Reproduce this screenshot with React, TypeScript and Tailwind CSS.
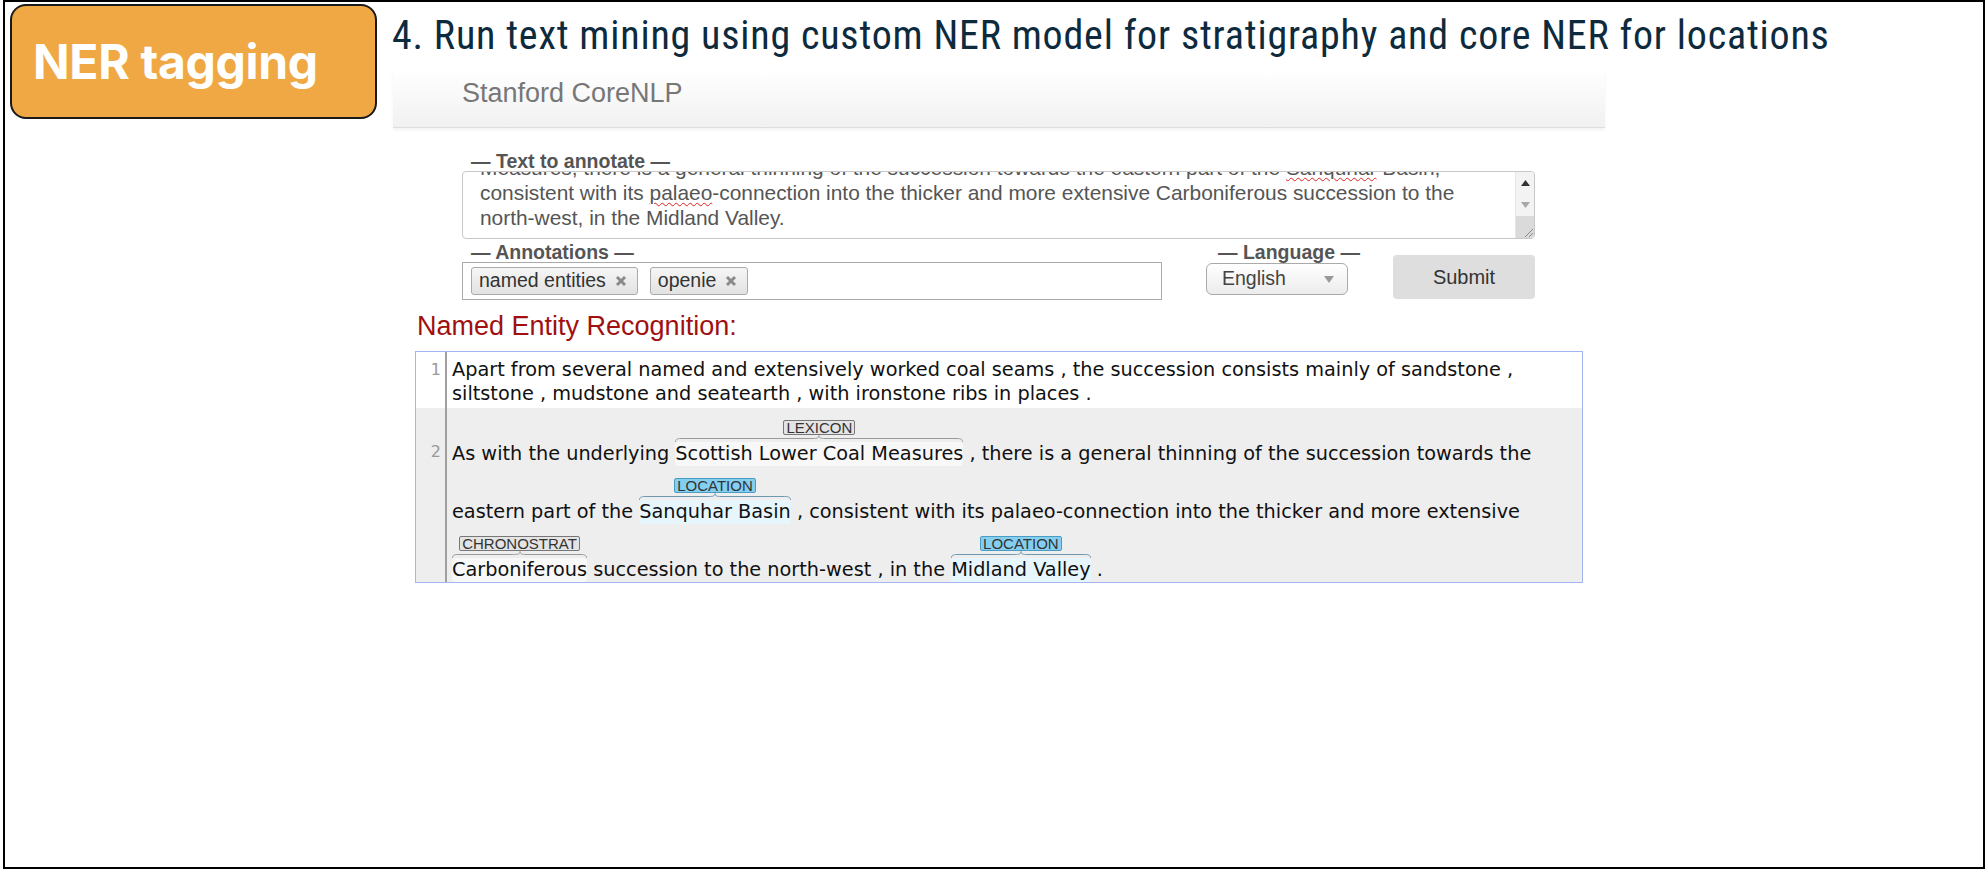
import React from "react";

type Kind = "lexicon" | "location" | "chrono";

const labelClass: Record<Kind, string> = {
  lexicon: "bg-[#e4e4e4] border-[#777777]",
  location: "bg-[#84cff0] border-[#4b9cc2]",
  chrono: "bg-[#e4e4e4] border-[#777777]",
};

const wordClass: Record<Kind, string> = {
  lexicon: "bg-[#f8f8f8]",
  location: "bg-[#e7f6fd]",
  chrono: "bg-[#f8f8f8]",
};

const braceColor: Record<Kind, string> = {
  lexicon: "#9a9a9a",
  location: "#6f97b2",
  chrono: "#9a9a9a",
};

function Brace({ color }: { color: string }) {
  return (
    <div className="flex h-[7px]">
      <svg width="6" height="7" viewBox="0 0 6 7">
        <path d="M0.5 7 C0.5 4.5 2 3.5 6 3.5" stroke={color} fill="none" />
      </svg>
      <svg className="h-[7px] flex-1" viewBox="0 0 10 7" preserveAspectRatio="none">
        <path d="M0 3.5 H10" stroke={color} vectorEffect="non-scaling-stroke" />
      </svg>
      <svg width="12" height="7" viewBox="0 0 12 7">
        <path d="M0 3.5 C4 3.5 6 3 6 0.5 C6 3 8 3.5 12 3.5" stroke={color} fill="none" />
      </svg>
      <svg className="h-[7px] flex-1" viewBox="0 0 10 7" preserveAspectRatio="none">
        <path d="M0 3.5 H10" stroke={color} vectorEffect="non-scaling-stroke" />
      </svg>
      <svg width="6" height="7" viewBox="0 0 6 7">
        <path d="M0 3.5 C4 3.5 5.5 4.5 5.5 7" stroke={color} fill="none" />
      </svg>
    </div>
  );
}

function Entity({ kind, label, text }: { kind: Kind; label: string; text: string }) {
  return (
    <span className="inline-flex flex-col">
      <span
        className={`self-center h-[15px] px-[2px] border rounded-[2px] text-[15px] leading-[13px] text-[#333] font-['Liberation_Sans',Arial,sans-serif] ${labelClass[kind]}`}
      >
        {label}
      </span>
      <Brace color={braceColor[kind]} />
      <span className={`leading-[24px] rounded-[4px] ${wordClass[kind]}`}>{text}</span>
    </span>
  );
}

function Chip({ text }: { text: string }) {
  return (
    <div className="flex items-center h-[28px] pl-[7px] pr-[10px] gap-[9px] border border-[#aaaaaa] rounded-[3px] bg-gradient-to-b from-[#f6f6f6] to-[#e2e2e2] text-[#333]">
      <span>{text}</span>
      <svg width="12" height="12" viewBox="0 0 12 12">
        <path d="M2 2 L10 10 M10 2 L2 10" stroke="#8a8a8a" strokeWidth="3" />
      </svg>
    </div>
  );
}

export default function App() {
  return (
    <div className="w-[1986px] h-[870px] bg-white overflow-hidden">
      <div className="ml-[3px] w-[1982px] h-[869px] border-2 border-black flex items-start">
        {/* badge */}
        <div className="ml-[5px] mt-[2px] w-[367px] h-[115px] shrink-0 rounded-[16px] border-2 border-[#1a1a1a] bg-[#f0a845] flex items-center pl-[21px]">
          <span className="text-white font-bold text-[48px] font-['Inter',sans-serif] tracking-[-0.3px]">
            NER tagging
          </span>
        </div>

        <div className="ml-[15px] flex flex-col">
          <div className="mt-[11px] h-[46px] leading-[46px] text-[40px] text-[#0e2a3d] font-['Roboto',sans-serif] font-stretch-condensed tracking-[0.8px] whitespace-nowrap">
            4. Run text mining using custom NER model for stratigraphy and core NER for locations
          </div>

          <div className="mt-[11px] ml-[1px] w-[1212px] font-['Liberation_Sans',Arial,sans-serif]">
            {/* CoreNLP header */}
            <div className="h-[58px] pt-[8px] pl-[69px] bg-gradient-to-b from-white to-[#f1f1f1] border-b border-[#dddddd] shadow-[0_2px_3px_rgba(0,0,0,0.05)]">
              <span className="text-[27px] leading-[30px] text-[#777]">Stanford CoreNLP</span>
            </div>

            {/* form */}
            <div className="pl-[69px] w-[1142px] text-[19.5px]">
              <div className="relative z-10 mt-[24px] h-[19px] leading-[19px] pl-[9px] font-bold text-[#555]">
                — Text to annotate —
              </div>
              <div className="h-[68px] flex border border-[#c8c8c8] rounded-[4px] overflow-hidden bg-white">
                <div className="flex-1 overflow-hidden pl-[17px] text-[#555] text-[20.9px] leading-[25px] whitespace-nowrap">
                  <div className="-mt-[17px]">
                    Measures, there is a general thinning of the succession towards the eastern part of the{" "}
                    <span className="underline decoration-wavy decoration-[#e02020] decoration-1 underline-offset-2">
                      Sanquhar
                    </span>{" "}
                    Basin,
                  </div>
                  <div>
                    consistent with its{" "}
                    <span className="underline decoration-wavy decoration-[#e02020] decoration-1 underline-offset-2">
                      palaeo
                    </span>
                    -connection into the thicker and more extensive Carboniferous succession to the
                  </div>
                  <div>north-west, in the Midland Valley.</div>
                </div>
                <div className="w-[19px] flex flex-col bg-[#f3f3f3] border-l border-[#e6e6e6]">
                  <div className="h-[22px] flex items-center justify-center">
                    <svg width="9" height="6" viewBox="0 0 9 6">
                      <path d="M4.5 0 L9 6 L0 6 Z" fill="#333" />
                    </svg>
                  </div>
                  <div className="h-[22px] flex items-center justify-center">
                    <svg width="9" height="6" viewBox="0 0 9 6">
                      <path d="M0 0 L9 0 L4.5 6 Z" fill="#a8a8a8" />
                    </svg>
                  </div>
                  <div className="flex-1 bg-[#dadada] flex items-end justify-end">
                    <svg width="12" height="12" viewBox="0 0 12 12">
                      <path d="M11 3 L3 11 M11 7 L7 11" stroke="#888" strokeWidth="1" />
                    </svg>
                  </div>
                </div>
              </div>

              <div className="flex items-start mt-[4px]">
                <div className="w-[700px]">
                  <div className="h-[19px] leading-[19px] pl-[9px] font-bold text-[#555]">— Annotations —</div>
                  <div className="h-[38px] border border-[#aaaaaa] bg-white flex items-center gap-[12px] pl-[8px]">
                    <Chip text="named entities" />
                    <Chip text="openie" />
                  </div>
                </div>
                <div className="ml-[44px] w-[142px]">
                  <div className="h-[19px] leading-[19px] pl-[12px] font-bold text-[#555] whitespace-nowrap">— Language —</div>
                  <div className="mt-[1px] h-[32px] border border-[#aaaaaa] rounded-[6px] bg-gradient-to-b from-white to-[#ececec] flex items-center justify-between pl-[15px] pr-[13px] text-[#444]">
                    <span>English</span>
                    <svg width="10" height="7" viewBox="0 0 10 7">
                      <path d="M0 0 L10 0 L5 7 Z" fill="#999" />
                    </svg>
                  </div>
                </div>
                <div className="ml-[45px] mt-[12px] w-[142px] h-[44px] rounded-[4px] bg-[#dedede] flex items-center justify-center text-[20px] text-[#333]">
                  Submit
                </div>
              </div>
            </div>

            <div className="mt-[10px] pl-[24px] h-[32px] leading-[32px] text-[27px] text-[#a01010]">
              Named Entity Recognition:
            </div>

            {/* brat view */}
            <div className="mt-[9px] ml-[22px] w-[1168px] border border-[#a3b6f2] font-['DejaVu_Sans',Verdana,sans-serif] text-[19.3px] text-[#111]">
              <div className="flex bg-white">
                <div className="w-[31px] shrink-0 border-r-2 border-[#a0a0a0] pt-[6px] pr-[4px] text-right text-[16px] leading-[24px] text-[#999]">
                  1
                </div>
                <div className="pl-[5px] pt-[6px] pb-[2px] leading-[24px] whitespace-pre">
                  <div>Apart from several named and extensively worked coal seams , the succession consists mainly of sandstone ,</div>
                  <div>siltstone , mudstone and seatearth , with ironstone ribs in places .</div>
                </div>
              </div>
              <div className="flex bg-[#eeeeee]">
                <div className="w-[31px] shrink-0 border-r-2 border-[#a0a0a0] pt-[32px] pr-[4px] text-right text-[16px] leading-[24px] text-[#999]">
                  2
                </div>
                <div className="pl-[5px] whitespace-pre">
                  <div className="h-[58px] flex items-end leading-[24px]">
                    <span>As with the underlying </span>
                    <Entity kind="lexicon" label="LEXICON" text="Scottish Lower Coal Measures" />
                    <span> , there is a general thinning of the succession towards the</span>
                  </div>
                  <div className="h-[58px] flex items-end leading-[24px]">
                    <span>eastern part of the </span>
                    <Entity kind="location" label="LOCATION" text="Sanquhar Basin" />
                    <span> , consistent with its palaeo-connection into the thicker and more extensive</span>
                  </div>
                  <div className="h-[58px] flex items-end leading-[24px]">
                    <Entity kind="chrono" label="CHRONOSTRAT" text="Carboniferous" />
                    <span> succession to the north-west , in the </span>
                    <Entity kind="location" label="LOCATION" text="Midland Valley" />
                    <span> .</span>
                  </div>
                </div>
              </div>
            </div>
          </div>
        </div>
      </div>
    </div>
  );
}
